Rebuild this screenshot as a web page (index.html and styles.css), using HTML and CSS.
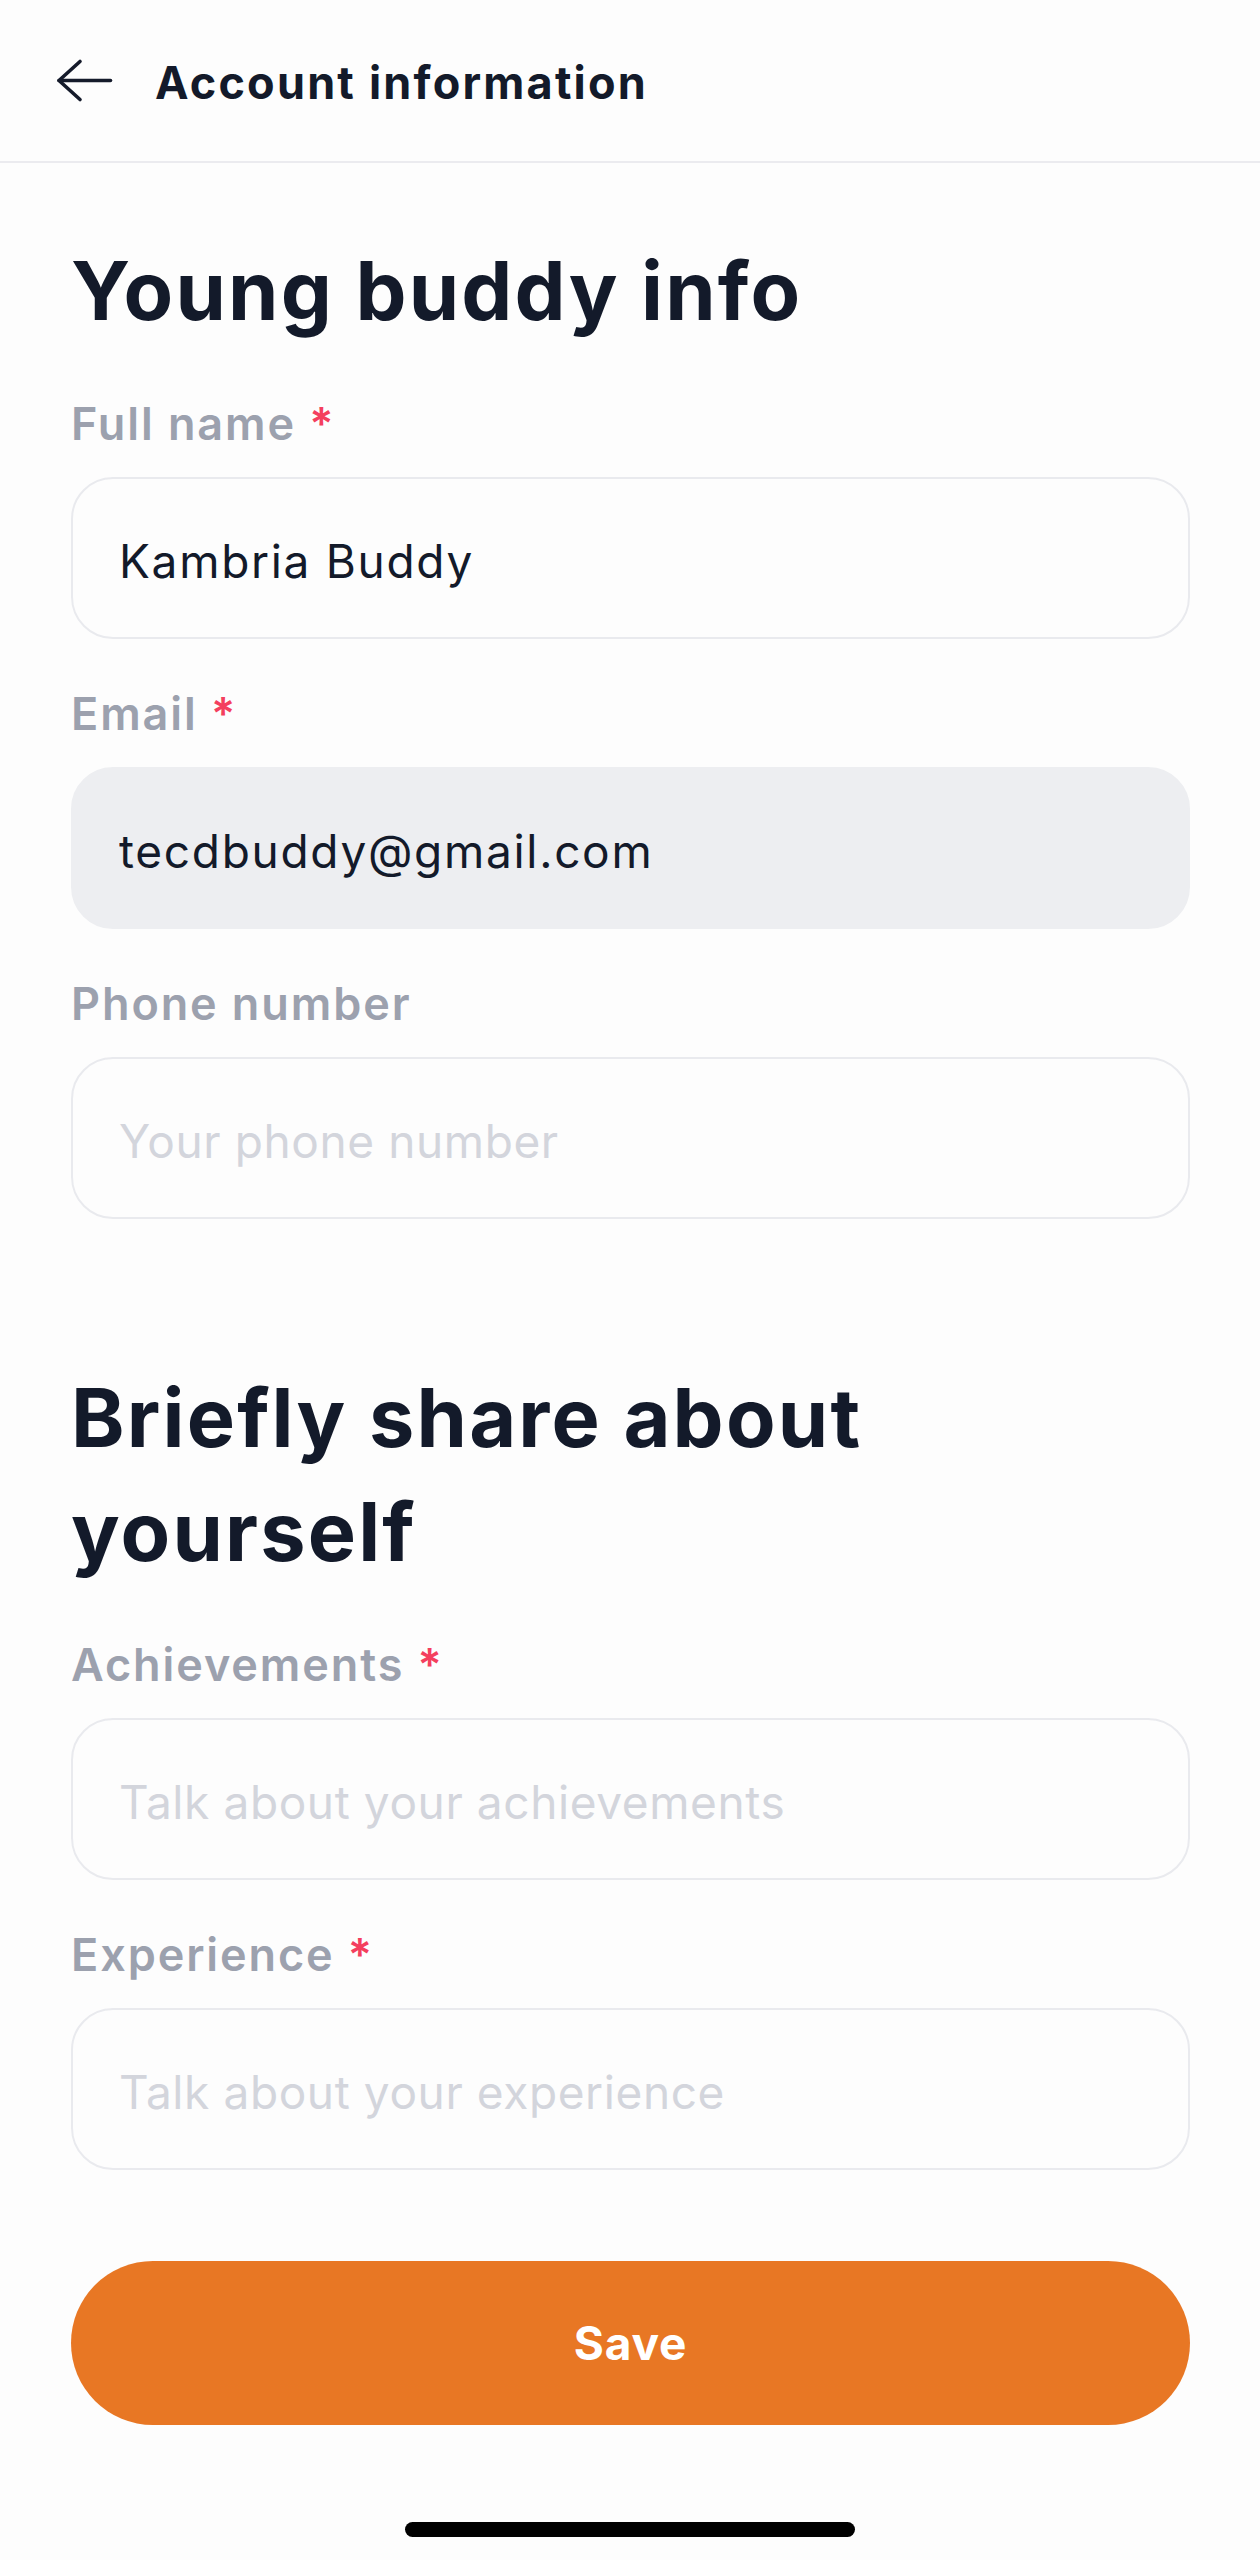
FILE: index.html
```html
<!DOCTYPE html>
<html lang="en">
<head>
<meta charset="utf-8">
<title>Account information</title>
<link rel="stylesheet" href="styles.css">
</head>
<body>
<div class="screen">
  <header class="topbar">
    <button class="back" aria-label="Back">
      <svg width="58" height="45" viewBox="0 0 58 45" fill="none" stroke="#151b2b" stroke-width="3.6" stroke-linecap="round" stroke-linejoin="round">
        <path d="M24 3.5 L3 22.5 L24 41.5"/>
        <path d="M3 22.5 H54.5"/>
      </svg>
    </button>
    <h1 class="topbar-title">Account information</h1>
  </header>

  <main class="content">
    <h2 class="section-title">Young buddy info</h2>

    <div class="field">
      <label class="label">Full name <span class="req">*</span></label>
      <input class="input" type="text" value="Kambria Buddy">
    </div>

    <div class="field">
      <label class="label">Email <span class="req">*</span></label>
      <input class="input input-disabled" type="text" value="tecdbuddy@gmail.com" readonly>
    </div>

    <div class="field">
      <label class="label">Phone number</label>
      <input class="input" type="text" placeholder="Your phone number">
    </div>

    <h2 class="section-title section-title-2">Briefly share about yourself</h2>

    <div class="field">
      <label class="label">Achievements <span class="req">*</span></label>
      <input class="input" type="text" placeholder="Talk about your achievements">
    </div>

    <div class="field">
      <label class="label">Experience <span class="req">*</span></label>
      <input class="input" type="text" placeholder="Talk about your experience">
    </div>

    <button class="save">Save</button>
  </main>

  <div class="home-bar"><span class="home-indicator"></span></div>
</div>
</body>
</html>
```

FILE: styles.css
```css
* {
  box-sizing: border-box;
}

html, body {
  margin: 0;
  padding: 0;
  background: #fdfdfd;
}

body {
  font-family: Inter, "Noto Sans", "Liberation Sans", sans-serif;
  color: #131a2a;
}

.screen {
  width: 1260px;
  min-height: 2560px;
  display: flex;
  flex-direction: column;
}

.topbar {
  height: 163px;
  display: flex;
  align-items: center;
  padding: 4px 0 0 56px;
  border-bottom: 2px solid #ebebef;
}

.back {
  border: 0;
  background: none;
  padding: 0;
  width: 58px;
  height: 45px;
  display: block;
  margin-top: -4px;
}

.back svg {
  display: block;
}

.topbar-title {
  margin: 0 0 0 41px;
  font-size: 45px;
  font-weight: 700;
  letter-spacing: 2.2px;
  line-height: 54px;
  color: #131a2a;
}

.content {
  display: flex;
  flex-direction: column;
  padding: 0 70px 0 71px;
}

.section-title {
  margin: 71px 0 0 0;
  font-size: 81px;
  font-weight: 700;
  line-height: 114px;
  letter-spacing: 2.2px;
  color: #131a2a;
}

.section-title-2 {
  margin-top: 142px;
  width: 900px;
}

.field {
  display: flex;
  flex-direction: column;
  margin-top: 48px;
}

.section-title + .field {
  margin-top: 49px;
}

.label {
  font-size: 45px;
  line-height: 54px;
  font-weight: 600;
  letter-spacing: 1.9px;
  color: #9ca1ae;
  margin-bottom: 26px;
}

.req {
  color: #f43f5e;
  margin-left: 0;
}

.input {
  width: 100%;
  height: 162px;
  border: 2.5px solid #e9eaee;
  border-radius: 42px;
  background: #fdfdfd;
  padding: 6px 0 0 46px;
  font-family: Inter, "Noto Sans", "Liberation Sans", sans-serif;
  font-size: 46px;
  font-weight: 400;
  letter-spacing: 1.7px;
  color: #131a2a;
  outline: none;
}

.input::placeholder {
  color: #d3d5dc;
  letter-spacing: 0.6px;
}

.input-disabled {
  background: #edeef1;
  border-color: #edeef1;
}

.save {
  margin-top: 91px;
  height: 164px;
  width: 100%;
  border: 0;
  border-radius: 82px;
  background: #e87724;
  color: #ffffff;
  font-family: Inter, "Noto Sans", "Liberation Sans", sans-serif;
  font-size: 46px;
  font-weight: 700;
  letter-spacing: 0.8px;
}

.home-bar {
  display: flex;
  justify-content: center;
  padding-top: 97px;
}

.home-indicator {
  display: block;
  width: 450px;
  height: 15px;
  border-radius: 8px;
  background: #000000;
}
```
